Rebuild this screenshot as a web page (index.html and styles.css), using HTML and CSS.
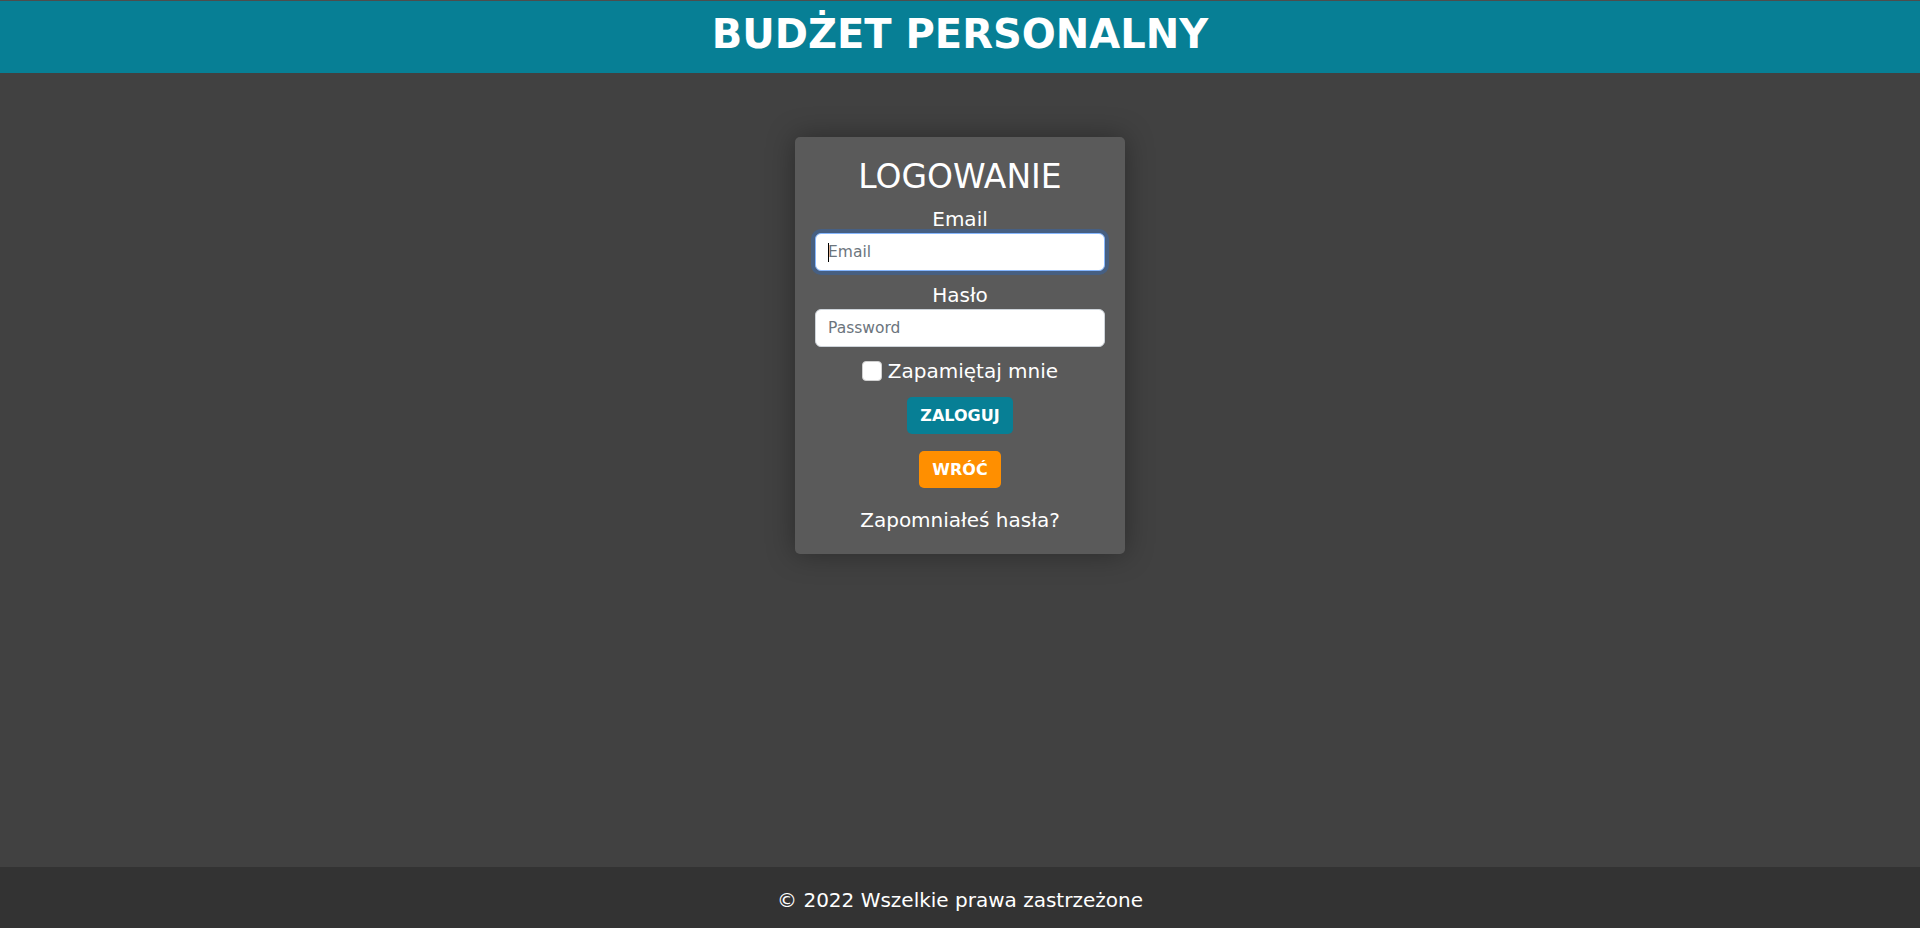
FILE: index.html
```html
<!DOCTYPE html>
<html lang="pl">
<head>
<meta charset="utf-8">
<title>Budżet Personalny - Logowanie</title>
<link rel="stylesheet" href="styles.css">
</head>
<body>
<div class="page">
  <header class="top">
    <h1 class="brand">BUDŻET PERSONALNY</h1>
  </header>
  <main class="main">
    <form class="card">
      <h2 class="card-title">LOGOWANIE</h2>
      <label class="label" for="email">Email</label>
      <div class="field">
        <input class="input input-focus" id="email" type="email" placeholder="Email">
        <span class="caret"></span>
      </div>
      <label class="label" for="pass">Hasło</label>
      <div class="field">
        <input class="input" id="pass" type="password" placeholder="Password">
      </div>
      <label class="remember"><input class="check" type="checkbox"> Zapamiętaj mnie</label>
      <button class="btn btn-login" type="button">ZALOGUJ</button>
      <button class="btn btn-back" type="button">WRÓĆ</button>
      <a class="forgot" href="#">Zapomniałeś hasła?</a>
    </form>
  </main>
  <footer class="foot">© 2022 Wszelkie prawa zastrzeżone</footer>
</div>
</body>
</html>
```
FILE: styles.css
```css
* { box-sizing: border-box; }
html, body { margin: 0; padding: 0; }
body {
  background: #ffffff;
  font-family: "DejaVu Sans", Verdana, sans-serif;
  color: #ffffff;
}
.page {
  display: flex;
  flex-direction: column;
  height: 928px;
  border-top: 1px solid #4d4d4d;
}
.top {
  background: #077f95;
  height: 72px;
  padding-top: 10px;
  text-align: center;
}
.brand {
  margin: 0;
  font-size: 40px;
  font-weight: bold;
  line-height: normal;
  color: #ffffff;
}
.main {
  flex: 1;
  background: #414141;
  display: flex;
  flex-direction: column;
  align-items: center;
  padding-top: 64px;
}
.card {
  width: 330px;
  background: #5a5a5a;
  border-radius: 5px;
  box-shadow: 0 0 28px rgba(0, 0, 0, 0.35);
  padding: 20px 20px 22px;
  display: flex;
  flex-direction: column;
  align-items: center;
}
.card-title {
  margin: 0 0 11px;
  font-size: 33px;
  font-weight: normal;
  line-height: normal;
}
.label {
  display: block;
  font-size: 20px;
  line-height: normal;
  margin-bottom: 2px;
}
.field {
  position: relative;
  width: 100%;
  margin-bottom: 12px;
}
.input {
  display: block;
  width: 100%;
  height: 38px;
  padding: 0 12px;
  border: 1px solid #ced4da;
  border-radius: 6px;
  background: #ffffff;
  font-family: "DejaVu Sans", Verdana, sans-serif;
  font-size: 15.5px;
  color: #212529;
  outline: none;
}
.input::placeholder { color: #6c757d; }
.input-focus {
  border-color: #86b7fe;
  box-shadow: 0 0 0 4px rgba(13, 110, 253, 0.25);
}
.caret {
  position: absolute;
  left: 13px;
  top: 10px;
  width: 1px;
  height: 19px;
  background: #000000;
}
.remember {
  display: flex;
  align-items: center;
  gap: 6px;
  font-size: 20px;
  line-height: normal;
  margin-bottom: 14px;
}
.check {
  appearance: none;
  -webkit-appearance: none;
  margin: 0;
  width: 20px;
  height: 20px;
  background: #ffffff;
  border: 1px solid #d0d0d0;
  border-radius: 4px;
}
.btn {
  border: none;
  border-radius: 5px;
  color: #ffffff;
  font-family: "DejaVu Sans", Verdana, sans-serif;
  font-weight: bold;
  font-size: 16px;
  line-height: 19px;
  padding: 9px 13px;
}
.btn-login {
  background: #077f95;
  margin-bottom: 17px;
}
.btn-back {
  background: #ff8f00;
  margin-bottom: 20px;
  padding: 9px 13.5px;
}
.forgot {
  color: #ffffff;
  text-decoration: none;
  font-size: 20px;
  line-height: normal;
}
.foot {
  background: #333333;
  height: 61px;
  padding-top: 21px;
  text-align: center;
  font-size: 20px;
  line-height: normal;
}
```
